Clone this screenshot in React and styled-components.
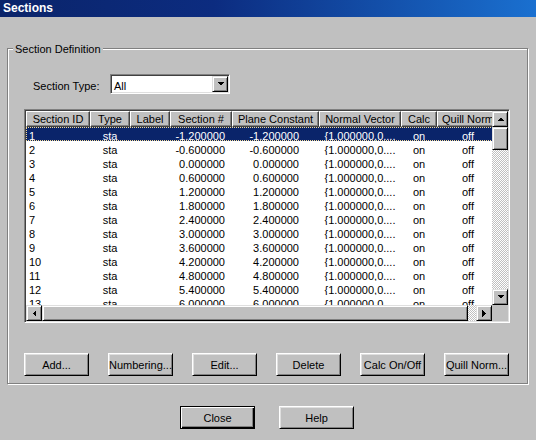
import React from 'react';
import styled, { createGlobalStyle, css } from 'styled-components';

const Global = createGlobalStyle`
  html, body { margin: 0; padding: 0; background: #c0c0c0; }
  body { font-family: "Liberation Sans", Arial, sans-serif; font-size: 11px; color: #000; }
  * { box-sizing: border-box; }
`;

const raised = css`
  border: 1px solid;
  border-color: #dfdfdf #000 #000 #dfdfdf;
  box-shadow: inset 1px 1px 0 #fff, inset -1px -1px 0 #808080;
  background: #c0c0c0;
`;

const checker = css`
  background-color: #fff;
  background-image: conic-gradient(#c0c0c0 25%, #fff 0 50%, #c0c0c0 0 75%, #fff 0);
  background-size: 2px 2px;
`;

const Window = styled.div`
  width: 536px;
  height: 440px;
  background: #c0c0c0;
  overflow: hidden;
`;

const TitleBar = styled.div`
  height: 17px;
  padding-left: 3px;
  background: linear-gradient(to right, #0a246a 0%, #0c2c80 40%, #1a70d0 100%);
  color: #fff;
  font-weight: bold;
  font-size: 12px;
  line-height: 17px;
`;

const Group = styled.section`
  position: relative;
  margin: 31px 0 0 7px;
  width: 521px;
  height: 336px;
  border: 1px solid #808080;
  box-shadow: 1px 1px 0 #fff, inset 1px 1px 0 #fff;
  padding: 25px 0 0 16px;
`;

const GroupLabel = styled.span`
  position: absolute;
  top: -6px;
  left: 5px;
  padding: 0 2px;
  line-height: 13px;
  background: #c0c0c0;
`;

const TypeRow = styled.div`
  display: flex;
  align-items: flex-start;
  margin-left: 9px;
  height: 20px;
`;

const FieldLabel = styled.label`
  width: 77px;
  padding-top: 4px;
  line-height: 16px;
`;

const Combo = styled.div`
  display: flex;
  width: 120px;
  height: 20px;
  padding: 1px;
  border: 1px solid;
  border-color: #808080 #fff #fff #808080;
  box-shadow: inset 1px 1px 0 #404040, inset -1px -1px 0 #dfdfdf;
  background: #fff;
`;

const ComboText = styled.div`
  flex: 1;
  height: 16px;
  padding-left: 2px;
  line-height: 20px;
  overflow: hidden;
`;

const ArrowButton = styled.div`
  ${raised};
  width: ${p => p.$w || 16}px;
  height: ${p => p.$h || 16}px;
  flex: none;
  display: flex;
  align-items: center;
  justify-content: center;
`;

const List = styled.div`
  display: flex;
  flex-direction: column;
  margin-top: 15px;
  width: 486px;
  height: 214px;
  padding: 1px;
  border: 1px solid;
  border-color: #808080 #fff #fff #808080;
  box-shadow: inset 1px 1px 0 #404040, inset -1px -1px 0 #dfdfdf;
  background: #c0c0c0;
`;

const ListMain = styled.div`
  display: flex;
  height: 194px;
`;

const Grid = styled.div`
  width: 466px;
  height: 194px;
  overflow: hidden;
  background: #fff;
`;

const HeaderRow = styled.div`
  display: flex;
  height: 16px;
  width: 473px;
  background: #c0c0c0;
`;

const HeaderCell = styled.div`
  flex: none;
  width: ${p => p.$w}px;
  height: 16px;
  border: 1px solid;
  border-color: #fff #404040 #404040 #fff;
  box-shadow: inset -1px -1px 0 #808080;
  text-align: center;
  line-height: 14px;
  white-space: nowrap;
  overflow: hidden;
`;

const Row = styled.div`
  display: flex;
  width: 473px;
  height: 14px;
  background: ${p => (p.$selected ? '#0a246a' : '#fff')};
  color: ${p => (p.$selected ? '#fff' : '#000')};
  outline: ${p => (p.$selected ? '1px dotted #f5db95' : 'none')};
  outline-offset: -1px;
`;

const Cell = styled.div`
  flex: none;
  width: ${p => p.$w}px;
  height: 14px;
  padding: 3px ${p => p.$pr || 0}px 0 ${p => p.$pl || 0}px;
  line-height: 12px;
  text-align: ${p => p.$align || 'left'};
  white-space: nowrap;
  overflow: hidden;
`;

const VScroll = styled.div`
  display: flex;
  flex-direction: column;
  width: 16px;
  height: 194px;
`;

const VThumb = styled.div`
  ${raised};
  height: 23px;
  flex: none;
`;

const Track = styled.div`
  ${checker};
  flex: 1;
`;

const HScrollRow = styled.div`
  display: flex;
  height: 16px;
`;

const HScroll = styled.div`
  display: flex;
  width: 466px;
  height: 16px;
`;

const HThumb = styled.div`
  ${raised};
  width: 426px;
  flex: none;
`;

const Corner = styled.div`
  width: 16px;
  height: 16px;
  background: #c0c0c0;
`;

const ButtonRow = styled.div`
  display: flex;
  gap: 19px;
  margin-top: 30px;
`;

const PushButton = styled.button`
  width: ${p => p.$w || 65}px;
  height: 23px;
  padding: 0;
  font-family: inherit;
  font-size: 11px;
  color: #000;
  background: #c0c0c0;
  white-space: nowrap;
  border: 1px solid;
  border-color: #fff #000 #000 #fff;
  box-shadow: inset 1px 1px 0 #dfdfdf, inset -1px -1px 0 #808080;
  ${p =>
    p.$default &&
    css`
      border-color: #000;
      box-shadow: inset 1px 1px 0 #fff, inset -1px -1px 0 #000, inset -2px -2px 0 #808080;
    `}
`;

const Footer = styled.div`
  display: flex;
  gap: 24px;
  margin-top: 22px;
  padding-left: 180px;
`;

const Arrow = ({ dir }) => {
  const pts = {
    up: '0,4 7,4 3.5,0.5',
    down: '0,0 7,0 3.5,3.5',
    left: '4,0 4,7 0.5,3.5',
    right: '0,0 0,7 3.5,3.5',
  }[dir];
  const vertical = dir === 'up' || dir === 'down';
  return (
    <svg width={vertical ? 7 : 4} height={vertical ? 4 : 7} viewBox={vertical ? '0 0 7 4' : '0 0 4 7'}>
      <polygon points={pts} fill="#000" shapeRendering="crispEdges" />
    </svg>
  );
};

const columns = [
  { key: 'id', title: 'Section ID', w: 64, align: 'left', pl: 3 },
  { key: 'type', title: 'Type', w: 40, align: 'center' },
  { key: 'label', title: 'Label', w: 40, align: 'center' },
  { key: 'num', title: 'Section #', w: 62, align: 'right', pr: 7 },
  { key: 'plane', title: 'Plane Constant', w: 87, align: 'right', pr: 20 },
  { key: 'normal', title: 'Normal Vector', w: 82, align: 'center' },
  { key: 'calc', title: 'Calc', w: 36, align: 'center' },
  { key: 'quill', title: 'Quill Norm', w: 62, align: 'center' },
];

const rows = Array.from({ length: 13 }, (_, i) => {
  const v = (-1.2 + 0.6 * i).toFixed(6);
  const val = v === '-0.000000' ? '0.000000' : v;
  return {
    id: String(i + 1),
    type: 'sta',
    label: '',
    num: val,
    plane: val,
    normal: '{1.000000,0....',
    calc: 'on',
    quill: 'off',
  };
});

const buttons = ['Add...', 'Numbering...', 'Edit...', 'Delete', 'Calc On/Off', 'Quill Norm...'];

export default function App() {
  return (
    <Window>
      <Global />
      <TitleBar>Sections</TitleBar>
      <Group>
        <GroupLabel>Section Definition</GroupLabel>
        <TypeRow>
          <FieldLabel>Section Type:</FieldLabel>
          <Combo>
            <ComboText>All</ComboText>
            <ArrowButton>
              <Arrow dir="down" />
            </ArrowButton>
          </Combo>
        </TypeRow>
        <List>
          <ListMain>
            <Grid>
              <HeaderRow>
                {columns.map(c => (
                  <HeaderCell key={c.key} $w={c.w}>
                    {c.title}
                  </HeaderCell>
                ))}
              </HeaderRow>
              {rows.map((r, i) => (
                <Row key={r.id} $selected={i === 0}>
                  {columns.map(c => (
                    <Cell key={c.key} $w={c.w} $align={c.align} $pl={c.pl} $pr={c.pr}>
                      {r[c.key]}
                    </Cell>
                  ))}
                </Row>
              ))}
            </Grid>
            <VScroll>
              <ArrowButton>
                <Arrow dir="up" />
              </ArrowButton>
              <VThumb />
              <Track />
              <ArrowButton>
                <Arrow dir="down" />
              </ArrowButton>
            </VScroll>
          </ListMain>
          <HScrollRow>
            <HScroll>
              <ArrowButton>
                <Arrow dir="left" />
              </ArrowButton>
              <HThumb />
              <Track />
              <ArrowButton>
                <Arrow dir="right" />
              </ArrowButton>
            </HScroll>
            <Corner />
          </HScrollRow>
        </List>
        <ButtonRow>
          {buttons.map(b => (
            <PushButton key={b}>{b}</PushButton>
          ))}
        </ButtonRow>
      </Group>
      <Footer>
        <PushButton $w={75} $default>
          Close
        </PushButton>
        <PushButton $w={75}>Help</PushButton>
      </Footer>
    </Window>
  );
}
